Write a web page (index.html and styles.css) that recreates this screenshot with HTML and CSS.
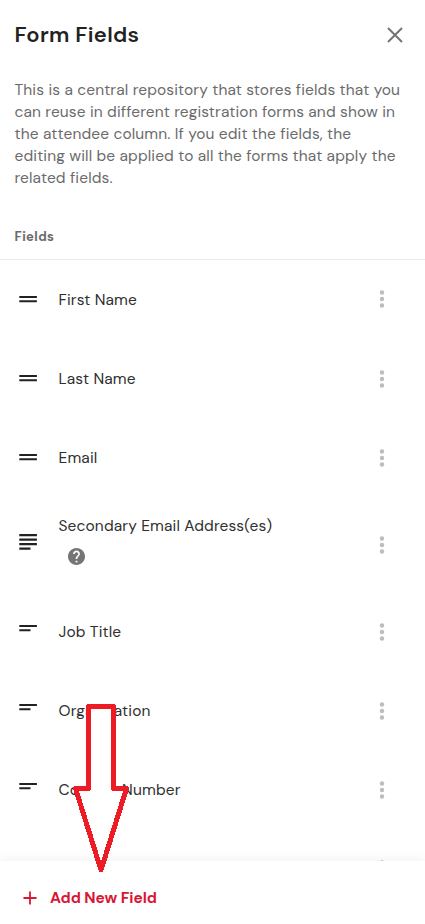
FILE: index.html
```html
<!DOCTYPE html>
<html lang="en">
<head>
<meta charset="utf-8">
<title>Form Fields</title>
<link rel="stylesheet" href="styles.css">
</head>
<body>
<svg class="defs" width="0" height="0" aria-hidden="true">
  <symbol id="short" viewBox="0 0 18 7"><path d="M.3 0h17.600v2H.3zM.3 4.300h17.600v2H.3z"/></symbol>
  <symbol id="text" viewBox="0 0 18 7"><path d="M.3 0h17.600v2H.3zM.3 4.300h11.200v2H.3z"/></symbol>
  <symbol id="long" viewBox="0 0 18 16"><path d="M.3 0h17.600v2.200H.3zM.3 4.600h17.600v2.200H.3zM.3 9h17.600v2.200H.3zM.3 13.600h11.200v2.200H.3z"/></symbol>
  <symbol id="more" viewBox="0 0 6 20"><circle cx="3" cy="3.5" r="2.2"/><circle cx="3" cy="10" r="2.2"/><circle cx="3" cy="16.5" r="2.2"/></symbol>
</svg>
<main class="panel">
  <header class="header">
    <h1 class="title">Form Fields</h1>
    <svg class="close" viewBox="0 0 16 16"><path d="M1 1l14 14M15 1L1 15"/></svg>
  </header>
  <p class="intro">This is a central repository that stores fields that you<br>can reuse in different registration forms and show in<br>the attendee column. If you edit the fields, the<br>editing will be applied to all the forms that apply the<br>related fields.</p>
  <h2 class="section">Fields</h2>
  <ul class="list">
    <li class="row"><svg class="icon"><use href="#short"/></svg><span class="label">First Name</span><svg class="more"><use href="#more"/></svg></li>
    <li class="row"><svg class="icon"><use href="#short"/></svg><span class="label">Last Name</span><svg class="more"><use href="#more"/></svg></li>
    <li class="row"><svg class="icon"><use href="#short"/></svg><span class="label">Email</span><svg class="more"><use href="#more"/></svg></li>
    <li class="row tall"><svg class="icon icon-long"><use href="#long"/></svg><div class="label"><span class="secondary">Secondary Email Address(es)</span><svg class="help" viewBox="2 2 20 20"><path d="M12 2C6.48 2 2 6.48 2 12s4.48 10 10 10 10-4.48 10-10S17.52 2 12 2zm1 17h-2v-2h2v2zm2.07-7.75l-.9.92C13.45 12.9 13 13.5 13 15h-2v-.5c0-1.1.45-2.1 1.17-2.83l1.24-1.26c.37-.36.59-.86.59-1.41 0-1.1-.9-2-2-2s-2 .9-2 2H8c0-2.21 1.79-4 4-4s4 1.79 4 4c0 .88-.36 1.68-.93 2.25z"/></svg></div><svg class="more"><use href="#more"/></svg></li>
    <li class="row"><svg class="icon icon-text"><use href="#text"/></svg><span class="label">Job Title</span><svg class="more"><use href="#more"/></svg></li>
    <li class="row"><svg class="icon icon-text"><use href="#text"/></svg><span class="label">Organization</span><svg class="more"><use href="#more"/></svg></li>
    <li class="row"><svg class="icon icon-text"><use href="#text"/></svg><span class="label">Contact Number</span><svg class="more"><use href="#more"/></svg></li>
    <li class="row"><span class="label"></span><svg class="more"><use href="#more"/></svg></li>
  </ul>
  <footer class="footer">
    <svg class="plus" viewBox="0 0 14 14"><path d="M7 .5v13M.5 7h13"/></svg>
    <span class="add">Add New Field</span>
  </footer>
  <svg class="arrow" viewBox="0 0 60 174"><path d="M15.500 5.500h25v82h13L28 169 2.500 87.500h13z"/></svg>
</main>
</body>
</html>
```
FILE: styles.css
```css
* { box-sizing: border-box; }
body { margin: 0; background: #fff; font-family: "DM Sans", Lato, sans-serif; color: #303030; }
.defs { display: none; }
.panel { position: relative; display: flex; flex-direction: column; height: 924px; overflow: hidden; }
.header { display: flex; flex: none; justify-content: space-between; align-items: center; height: 70px; padding: 0 22px 0 14.5px; }
.title { margin: 0; font-size: 22px; line-height: 28px; font-weight: 600; letter-spacing: .3px; color: #222; }
.close { width: 16px; height: 16px; fill: none; stroke: #757575; stroke-width: 2; }
.intro { flex: none; margin: 9px 0 0 14.5px; font-size: 15.5px; line-height: 22px; color: #6b6b6b; white-space: nowrap; letter-spacing: .13px; }
.section { flex: none; height: 71px; margin: 0; padding: 38px 14.5px 0; border-bottom: 1px solid #ebebeb; font-size: 13px; line-height: 20px; letter-spacing: .4px; color: #6b6b6b; }
.list { flex: 1; min-height: 0; overflow: hidden; margin: 0; padding: 0; list-style: none; }
.row { display: flex; align-items: center; height: 79.2px; padding: 0 40px 0 19px; }
.tall { height: 94.6px; }
.icon { flex: none; width: 18px; height: 7px; fill: #222; }
.icon-text { margin-bottom: 7px; }
.icon-long { height: 16px; margin-bottom: 6px; }
.label { flex: 1; margin-left: 21.5px; font-size: 15.5px; line-height: 22px; letter-spacing: .13px; white-space: nowrap; }
.secondary { display: block; margin-bottom: 10.500px; }
.help { display: block; width: 17px; height: 17px; margin: 0 0 9.500px 9.500px; fill: #757575; }
.more { flex: none; width: 6px; height: 20px; margin-bottom: .4px; fill: #bdbdbd; }
.footer { position: relative; display: flex; flex: none; align-items: center; height: 63px; padding: 10px 0 0 23px; background: #fff; box-shadow: 0 -1px 12px rgba(0, 0, 0, .06); }
.plus { width: 14px; height: 14px; fill: none; stroke: #d81735; stroke-width: 1.8; }
.add { margin-left: 13px; font-size: 15.5px; line-height: 22px; font-weight: 700; letter-spacing: -.06px; color: #d81735; }
.arrow { position: absolute; left: 73px; top: 701px; width: 60px; height: 174px; fill: #fff; stroke: #ed1c24; stroke-width: 5; stroke-linejoin: round; shape-rendering: crispEdges; }
```
